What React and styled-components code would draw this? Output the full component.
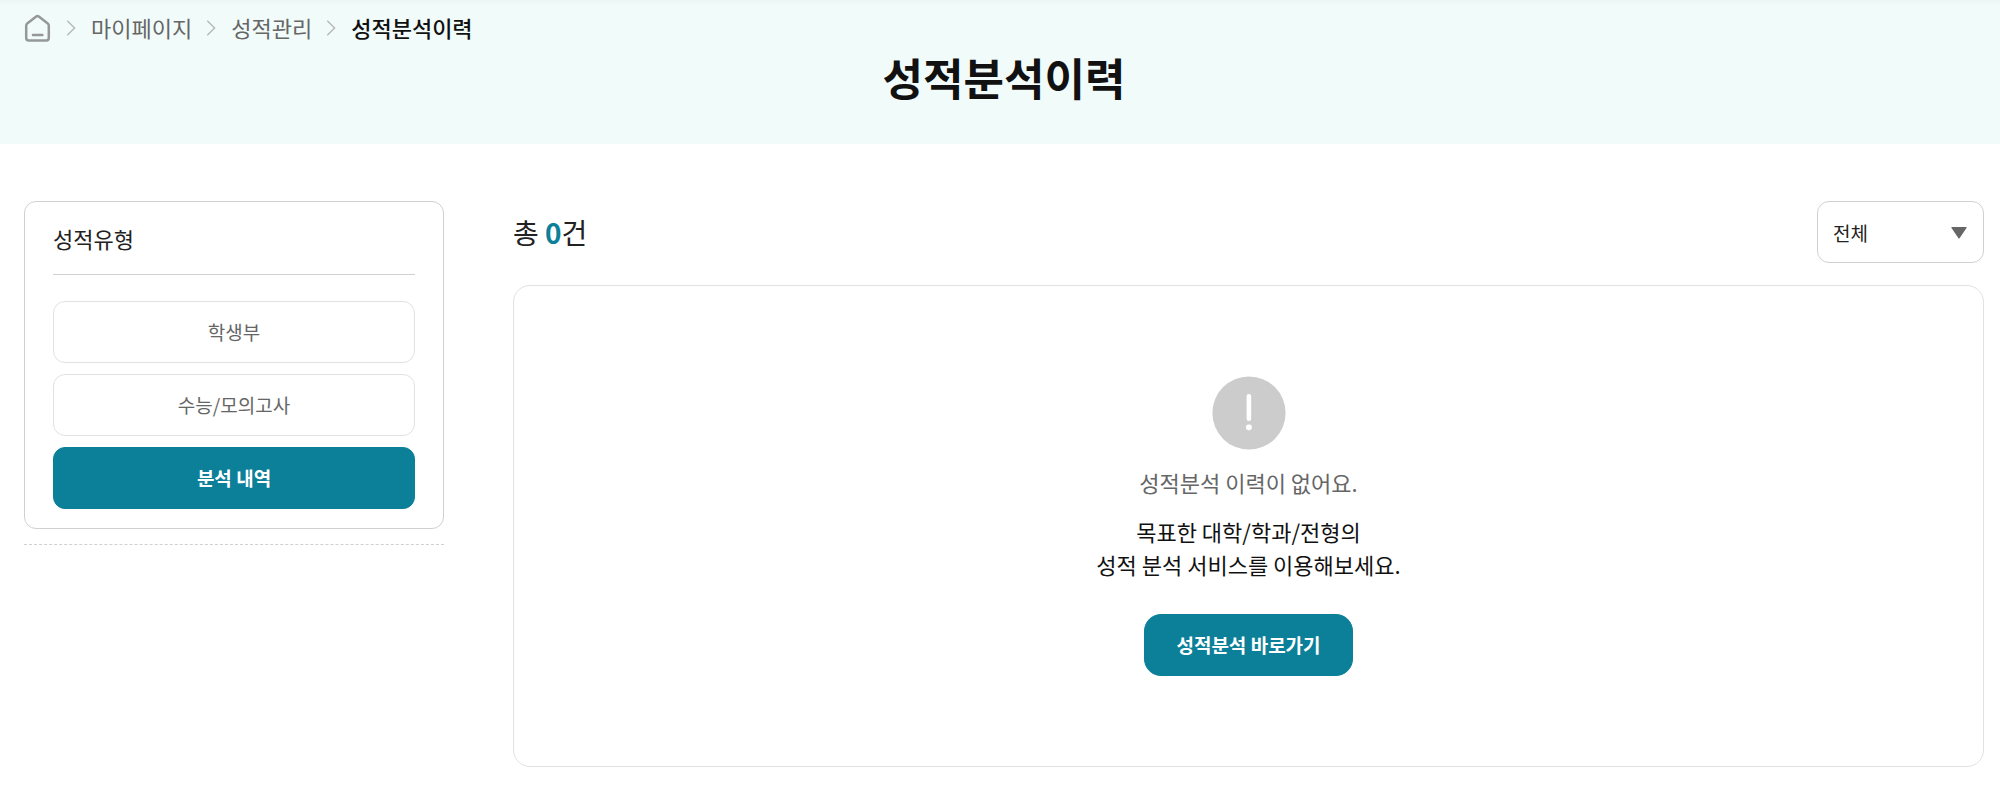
import React, { useState } from "react";
import styled, { createGlobalStyle, css } from "styled-components";

const color = {
  brand: "#0d8099",
  tint: "#f1fbfa",
  ink: "#111111",
  text: "#222222",
  muted: "#666666",
  line: "#cfd1d1",
  softLine: "#e2e2e2",
};

const GlobalStyle = createGlobalStyle`
  *, *::before, *::after { box-sizing: border-box; }
  body {
    margin: 0;
    background: #fff;
    color: ${color.text};
    font-family: "Noto Sans CJK KR", "Noto Sans", sans-serif;
    font-size: 22px;
    line-height: 33px;
  }
  h1, h2, p, ol, ul { margin: 0; padding: 0; }
  ol, ul { list-style: none; }
  button, select { font: inherit; cursor: pointer; }
`;

const Hero = styled.header`
  padding: 11px 24px 34px;
  background: linear-gradient(#edf6f6, ${color.tint} 5px);
`;

const Crumbs = styled.ol`
  display: flex;
  align-items: center;
  gap: 15px;
`;

const Crumb = styled.li`
  display: flex;
  align-items: center;
  gap: 15px;
`;

const CrumbLink = styled.a`
  display: flex;
  color: ${color.muted};
  text-decoration: none;
`;

const CurrentCrumb = styled.span`
  color: ${color.ink};
  font-weight: 500;
`;

const PageTitle = styled.h1`
  padding-left: 8px;
  color: ${color.ink};
  font-size: 44px;
  font-weight: 700;
  line-height: 66px;
  text-align: center;
`;

const Layout = styled.main`
  display: flex;
  align-items: flex-start;
  gap: 69px;
  padding: 57px 16px 36px 24px;
`;

const Sidebar = styled.aside`
  flex: 0 0 420px;
  padding-bottom: 15px;
  border-bottom: 1px dashed ${color.line};
`;

const FilterCard = styled.section`
  padding: 20px 28px 19px;
  border: 1px solid ${color.line};
  border-radius: 12px;
`;

const FilterTitle = styled.h2`
  padding-bottom: 19px;
  border-bottom: 1px solid ${color.line};
  font-size: 22px;
  font-weight: 400;
`;

const FilterList = styled.ul`
  display: grid;
  gap: 11px;
  padding-top: 26px;
`;

const filled = css`
  border-color: ${color.brand};
  background: ${color.brand};
  color: #fff;
  font-weight: 700;
`;

const FilterButton = styled.button`
  width: 100%;
  height: 62px;
  padding: 0 0 2px;
  border: 1px solid ${color.softLine};
  border-radius: 12px;
  background: #fff;
  color: ${color.muted};
  font-size: 19px;
  ${({ $active }) => $active && filled}
`;

const Results = styled.section`
  flex: 1;
  min-width: 0;
`;

const Toolbar = styled.div`
  display: flex;
  align-items: center;
  justify-content: space-between;
  margin-bottom: 22px;
`;

const Count = styled.p`
  font-size: 28px;
  line-height: 42px;

  strong {
    color: ${color.brand};
    font-weight: 700;
  }
`;

const SelectBox = styled.div`
  position: relative;
  width: 167px;

  svg {
    position: absolute;
    top: 26px;
    right: 17px;
    pointer-events: none;
  }
`;

const Select = styled.select`
  display: block;
  width: 100%;
  height: 62px;
  padding: 0 48px 0 15px;
  border: 1px solid ${color.line};
  border-radius: 12px;
  background: #fff;
  color: ${color.text};
  font-size: 19px;
  appearance: none;
`;

const EmptyPanel = styled.div`
  display: flex;
  flex-direction: column;
  align-items: center;
  padding: 90px 24px;
  border: 1px solid ${color.softLine};
  border-radius: 17px;
  text-align: center;
`;

const EmptyLead = styled.p`
  margin-top: 16px;
  color: ${color.muted};
`;

const EmptyGuide = styled.p`
  margin-top: 16px;
  color: ${color.ink};
`;

const ActionButton = styled.button`
  height: 62px;
  margin-top: 33px;
  padding: 0 31px 2px;
  border: 1px solid;
  border-radius: 17px;
  font-size: 19px;
  ${filled}
`;

const HomeIcon = () => (
  <svg width="28" height="28" viewBox="0 0 28 28" fill="none" stroke="#959898" strokeWidth="2.5" strokeLinecap="round" strokeLinejoin="round" aria-hidden="true">
    <path d="M2.2 11.6Q2.2 10.2 3.2 9.4L12.2 2.6Q13.5 1.6 14.8 2.6L23.8 9.4Q24.8 10.2 24.8 11.6V24Q24.8 26.4 22.4 26.4H4.6Q2.2 26.4 2.2 24Z" />
    <path d="M9 21H18.4" />
  </svg>
);

const Chevron = () => (
  <svg width="9" height="16" viewBox="0 0 9 16" fill="none" stroke="#b4b8b8" strokeWidth="1.4" aria-hidden="true">
    <path d="M0.2 0.7L7.6 8L0.2 15.3" />
  </svg>
);

const Caret = () => (
  <svg width="16" height="12" viewBox="0 0 16 12" fill="#666" aria-hidden="true">
    <path d="M1 0H15Q16.2 0 15.5 1.1L8.7 11Q8 12 7.3 11L0.5 1.1Q-0.2 0 1 0Z" />
  </svg>
);

const NoticeIcon = () => (
  <svg width="74" height="74" viewBox="0 0 74 74" aria-hidden="true">
    <circle cx="37" cy="37" r="36.6" fill="#ccc" />
    <rect x="34.6" y="18" width="4.6" height="27" rx="2.2" fill="#fff" />
    <rect x="34" y="48.4" width="5.8" height="5.8" rx="2.4" fill="#fff" />
  </svg>
);

const trail = ["마이페이지", "성적관리"];
const filters = ["학생부", "수능/모의고사", "분석 내역"];

export default function App() {
  const [active, setActive] = useState("분석 내역");

  return (
    <>
      <GlobalStyle />
      <Hero>
        <nav aria-label="breadcrumb">
          <Crumbs>
            <li>
              <CrumbLink href="#home" aria-label="홈">
                <HomeIcon />
              </CrumbLink>
            </li>
            {trail.map((name) => (
              <Crumb key={name}>
                <Chevron />
                <CrumbLink href={`#${name}`}>{name}</CrumbLink>
              </Crumb>
            ))}
            <Crumb>
              <Chevron />
              <CurrentCrumb aria-current="page">성적분석이력</CurrentCrumb>
            </Crumb>
          </Crumbs>
        </nav>
        <PageTitle>성적분석이력</PageTitle>
      </Hero>

      <Layout>
        <Sidebar>
          <FilterCard>
            <FilterTitle>성적유형</FilterTitle>
            <FilterList>
              {filters.map((name) => (
                <li key={name}>
                  <FilterButton
                    type="button"
                    $active={name === active}
                    aria-pressed={name === active}
                    onClick={() => setActive(name)}
                  >
                    {name}
                  </FilterButton>
                </li>
              ))}
            </FilterList>
          </FilterCard>
        </Sidebar>

        <Results>
          <Toolbar>
            <Count>
              총 <strong>0</strong>건
            </Count>
            <SelectBox>
              <Select aria-label="조회 구분" defaultValue="all">
                <option value="all">전체</option>
              </Select>
              <Caret />
            </SelectBox>
          </Toolbar>
          <EmptyPanel>
            <NoticeIcon />
            <EmptyLead>성적분석 이력이 없어요.</EmptyLead>
            <EmptyGuide>
              목표한 대학/학과/전형의
              <br />
              성적 분석 서비스를 이용해보세요.
            </EmptyGuide>
            <ActionButton type="button">성적분석 바로가기</ActionButton>
          </EmptyPanel>
        </Results>
      </Layout>
    </>
  );
}
